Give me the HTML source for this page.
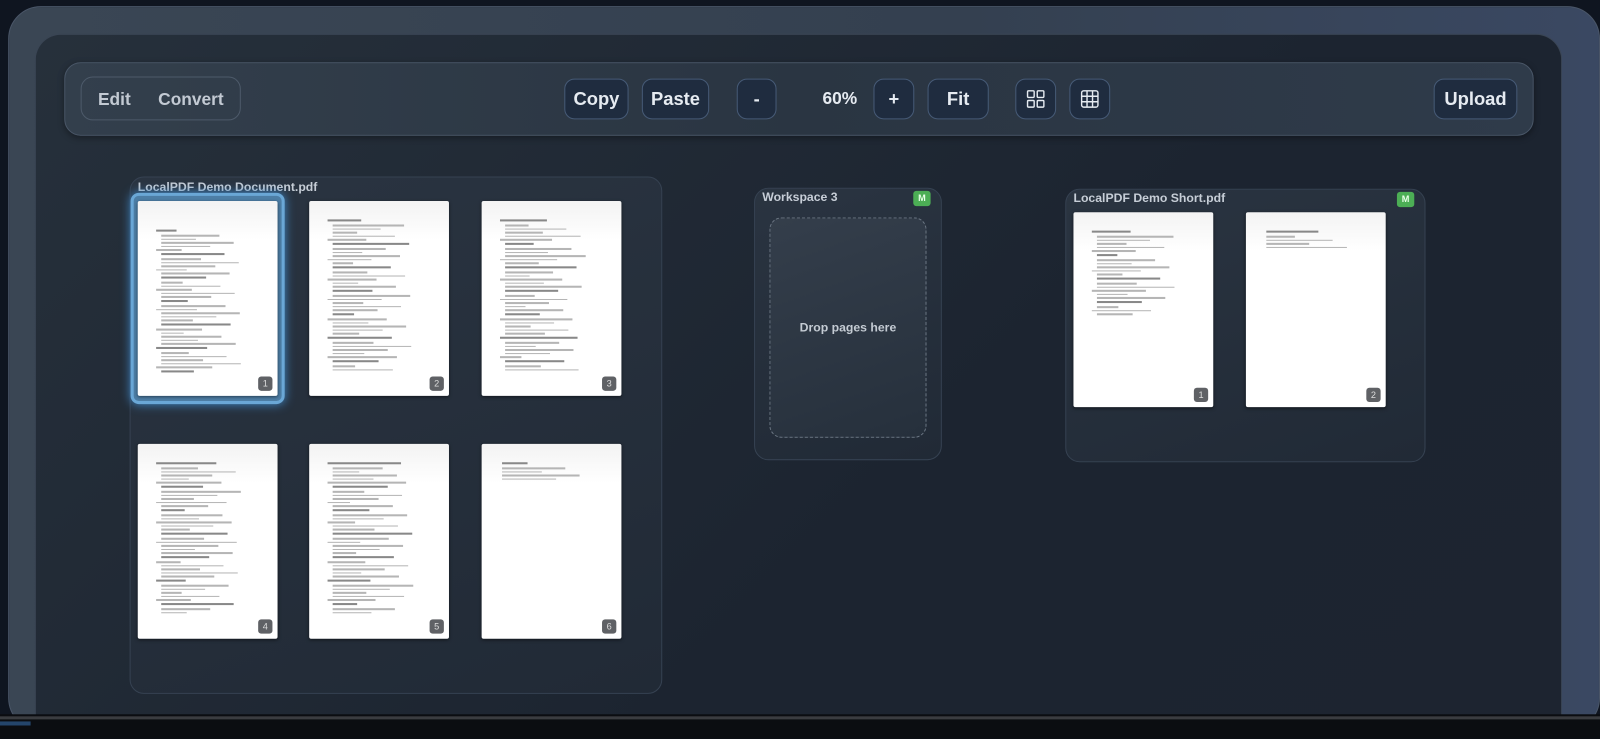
<!DOCTYPE html>
<html><head><meta charset="utf-8"><style>
*{box-sizing:border-box;margin:0;padding:0}
body{width:1600px;height:724px;overflow:hidden;background:#0f1520;font-family:"Liberation Sans",sans-serif;position:relative}
#wrap{position:absolute;left:0;top:0;width:1568px;height:710px;transform:scale(1.0204);transform-origin:0 0}
.abs{position:absolute}
#outer{left:8px;top:6px;width:1560px;height:710px;border-radius:32px;background:linear-gradient(90deg,#3a4654,#344050 60%,#3a4862);border:1px solid #4a5668}
#inner{left:34px;top:33px;width:1497px;height:680px;border-radius:26px 26px 0 0;background:linear-gradient(135deg,#26303b,#1c2430 60%,#1d2430);border:1px solid #3a4554;border-bottom:none}
#tb{left:63px;top:61px;width:1440px;height:72px;border-radius:16px;background:linear-gradient(90deg,#333f4c,#2a3542 50%,#2f3b4a);border:1px solid #495667;box-shadow:0 2px 6px rgba(0,0,0,.35)}
.grp{left:79px;top:75px;width:157px;height:43px;border:1px solid #4d5a6a;border-radius:12px;color:#c3cad3;font-size:17px;font-weight:bold}
.btn{top:77px;height:40px;border:1px solid #465a76;border-radius:10px;background:#1f2c3f;color:#e6ebf1;font-size:18px;font-weight:bold;display:flex;align-items:center;justify-content:center}
.card{border:1px solid #364252;border-radius:14px;background:linear-gradient(160deg,#2a3441,#212a36)}
.title{color:#c7ced7;font-size:12px;font-weight:bold}
.page{background:linear-gradient(#f3f3f3,#fff 20%);border-radius:2px;box-shadow:0 1px 3px rgba(0,0,0,.5);overflow:hidden}
.num{position:absolute;right:5px;bottom:5px;width:14px;height:14px;background:#5f6165;border-radius:3px;color:#ddd;font-size:9px;text-align:center;line-height:14px}
.ln{position:absolute;height:1.5px;background:#b5b5b5}
.m{width:17px;height:15px;background:#4cae55;border-radius:3px;color:#e8ffe8;font-size:9px;font-weight:bold;text-align:center;line-height:15px}
</style></head><body>
<div id="wrap">
<div id="outer" class="abs"></div>
<div id="inner" class="abs"></div>
<div id="tb" class="abs"></div>
<div class="abs grp"><span class="abs" style="left:16px;top:12px">Edit</span><span class="abs" style="left:75px;top:12px">Convert</span></div>
<div class="abs btn" style="left:553px;width:63px">Copy</div>
<div class="abs btn" style="left:629px;width:66px">Paste</div>
<div class="abs btn" style="left:722px;width:39px">-</div>
<div class="abs" style="left:806px;top:87px;color:#e6ebf1;font-size:17px;font-weight:bold">60%</div>
<div class="abs btn" style="left:856px;width:40px">+</div>
<div class="abs btn" style="left:909px;width:60px">Fit</div>
<div class="abs btn" style="left:995px;width:40px"><svg width="18" height="18" viewBox="0 0 18 18" fill="none" stroke="#e6ebf1" stroke-width="1.4"><rect x="1" y="1" width="6.5" height="6.5" rx="1"/><rect x="10.5" y="1" width="6.5" height="6.5" rx="1"/><rect x="1" y="10.5" width="6.5" height="6.5" rx="1"/><rect x="10.5" y="10.5" width="6.5" height="6.5" rx="1"/></svg></div>
<div class="abs btn" style="left:1048px;width:40px"><svg width="18" height="18" viewBox="0 0 18 18" fill="none" stroke="#e6ebf1" stroke-width="1.4"><rect x="1" y="1" width="16" height="16" rx="2"/><path d="M6.3 1v16M11.7 1v16M1 6.3h16M1 11.7h16"/></svg></div>
<div class="abs btn" style="left:1405px;width:82px">Upload</div>

<div class="abs card" style="left:127px;top:173px;width:522px;height:507px"></div>
<div class="abs title" style="left:135px;top:176px">LocalPDF Demo Document.pdf</div>
<div class="abs" style="left:128px;top:189px;width:151px;height:207px;border:3px solid #6aa7d6;border-radius:8px;box-shadow:0 0 10px #3f86c4;background:#4d7ea6"></div>

<div class="abs card" style="left:739px;top:184px;width:184px;height:267px"></div>
<div class="abs title" style="left:747px;top:186px">Workspace 3</div>
<div class="abs m" style="left:895px;top:187px">M</div>
<div class="abs" style="left:754px;top:213px;width:154px;height:216px;border:1.5px dashed #6b7683;border-radius:12px;background:linear-gradient(160deg,#343e4b,#26303c);color:#c4cbd3;font-size:12px;font-weight:bold;display:flex;align-items:center;justify-content:center">Drop pages here</div>

<div class="abs card" style="left:1044px;top:185px;width:353px;height:268px"></div>
<div class="abs title" style="left:1052px;top:187px">LocalPDF Demo Short.pdf</div>
<div class="abs m" style="left:1369px;top:188px">M</div>

<div class="abs" style="left:0;top:700px;width:1600px;height:24px;background:#0b0d11"></div>
<div class="abs" style="left:0;top:702px;width:1600px;height:3px;background:#3a3c40"></div>
<div class="abs" style="left:0;top:707px;width:30px;height:4px;background:#24456b"></div>

<div id="pages"></div>
</div>
<script>
var P=[[135,197,1],[303,197,2],[472,197,3],[135,435,4],[303,435,5],[472,435,6],[1052,208,1],[1221,208,2]];
var h='';
P.forEach(function(p,i){
 var w=137,ht=191;
 h+='<div class="abs page" style="left:'+p[0]+'px;top:'+p[1]+'px;width:'+w+'px;height:'+ht+'px">';
 var n=(i==5||i==7)?5:(i==6?22:40);
 var y=(i==0?28:18);
 for(var k=0;k<n;k++){
  var lw=20+((k*37+i*13)%60);var x=18+((k%5==0)?0:5);
  if(i==5||i==7)x=20;
  h+='<div class="ln" style="left:'+x+'px;top:'+y+'px;width:'+lw+'px;'+(k%6==0?'background:#888;':'')+'"></div>';
  y+= (k%6==0?5:3.6);
  if(y>ht-25)break;
 }
 h+='<div class="num">'+p[2]+'</div></div>';
});
document.getElementById('pages').innerHTML=h;
</script>
</body></html>
